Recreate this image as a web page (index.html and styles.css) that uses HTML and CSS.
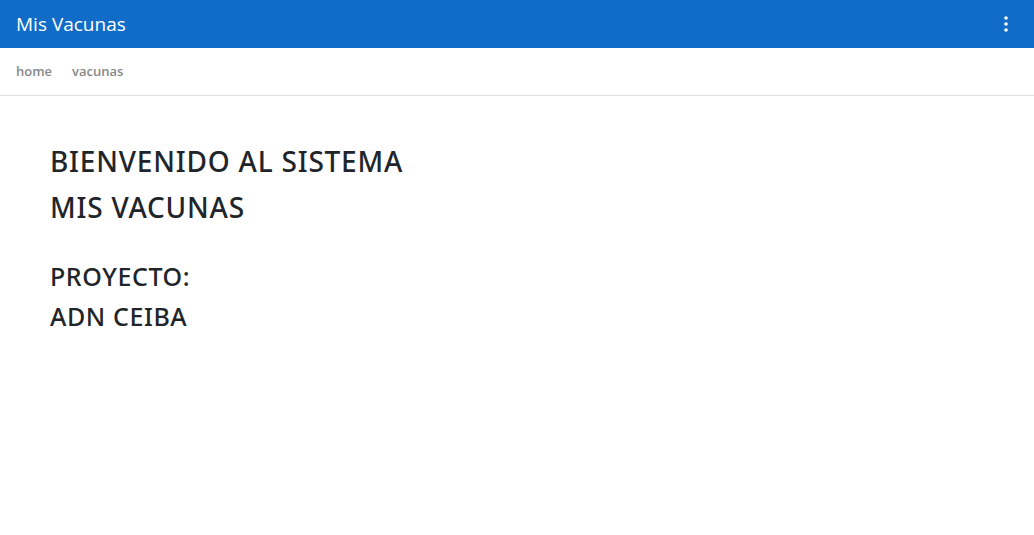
FILE: index.html
```html
<!DOCTYPE html>
<html lang="es">
<head>
<meta charset="utf-8">
<title>Mis Vacunas</title>
<link rel="stylesheet" href="styles.css">
</head>
<body>
<header class="topbar">
  <span class="brand">Mis Vacunas</span>
  <button class="menu-btn" aria-label="menu">
    <svg width="4" height="16" viewBox="0 0 4 16"><circle cx="2" cy="2" r="1.8" fill="#fff"/><circle cx="2" cy="8" r="1.8" fill="#fff"/><circle cx="2" cy="14" r="1.8" fill="#fff"/></svg>
  </button>
</header>
<nav class="subnav">
  <a class="subnav-link" href="#">home</a>
  <a class="subnav-link" href="#">vacunas</a>
</nav>
<main class="content">
  <h1 class="title">BIENVENIDO AL SISTEMA<br>MIS VACUNAS</h1>
  <h2 class="subtitle">PROYECTO:<br>ADN CEIBA</h2>
</main>
</body>
</html>
```

FILE: styles.css
```css
* { box-sizing: border-box; }
body {
  margin: 0;
  font-family: "Open Sans", "Noto Sans", sans-serif;
  color: #212529;
  background: #fff;
}
.topbar {
  height: 48px;
  background: #116cc8;
  display: flex;
  align-items: center;
  justify-content: space-between;
  padding: 0 16px;
}
.brand {
  color: #fff;
  font-size: 19px;
}
.menu-btn {
  background: none;
  border: 0;
  padding: 0;
  width: 14px;
  height: 24px;
  display: flex;
  align-items: center;
  justify-content: center;
  margin-right: 5px;
}
.subnav {
  height: 48px;
  border-bottom: 1px solid #dedede;
  display: flex;
  align-items: center;
  gap: 20px;
  padding: 0 16px 1px;
}
.subnav-link {
  color: #888;
  font-size: 13px;
  font-weight: 600;
  text-decoration: none;
}
.content {
  padding: 42px 50px;
}
.title {
  margin: 0;
  font-family: "Noto Sans", "Open Sans", sans-serif;
  font-size: 28px;
  font-weight: 500;
  line-height: 46px;
  letter-spacing: 0.8px;
}
.subtitle {
  margin: 26px 0 0;
  font-family: "Noto Sans", "Open Sans", sans-serif;
  font-size: 25px;
  font-weight: 500;
  line-height: 40px;
  letter-spacing: 0.6px;
}
```
